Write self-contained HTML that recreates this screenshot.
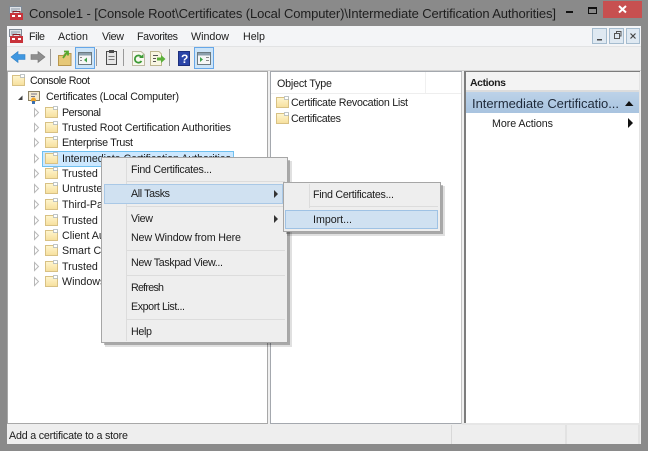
<!DOCTYPE html>
<html><head><meta charset="utf-8"><style>
html,body{margin:0;padding:0;background:#8a8a8a}
svg{display:block;filter:blur(.25px)}
text{font-family:"Liberation Sans",sans-serif;font-size:10.7px;fill:#1c1c1c}
</style></head><body>
<svg width="648" height="451" viewBox="0 0 648 451" xmlns="http://www.w3.org/2000/svg">
<defs>
<linearGradient id="fo" x1="0" y1="0" x2="0" y2="1"><stop offset="0" stop-color="#fff6cf"/><stop offset="1" stop-color="#f6df9c"/></linearGradient>
<linearGradient id="bl" x1="0" y1="0" x2="0" y2="1"><stop offset="0" stop-color="#bcd2e8"/><stop offset="1" stop-color="#a8c3df"/></linearGradient>
<g id="folder">
<path d="M0.500 1.500V11.500H12.500V1.500Z" fill="url(#fo)" stroke="#d8c184"/>
<path d="M8.500 0.500H12.500V3.500H8.500Z" fill="#fff" stroke="#aab4b8" stroke-width=".7"/>
</g>
<path id="tri" d="M0.500 0.500L4.500 4.500L0.500 8.500Z" fill="#fff" stroke="#b8b8b8"/>
<g id="app">
<rect x="0.500" y="0.500" width="12" height="7" fill="#dfe3e8" stroke="#7f8a96"/>
<path d="M2 3H11M2 5H8" stroke="#8a97a5"/>
<rect x="1" y="7" width="13" height="7" fill="#c8323a"/>
<path d="M4 7V5.500H11V7" fill="none" stroke="#8b1f25"/>
<rect x="3" y="9" width="3" height="2" fill="#fff"/>
<rect x="9" y="9" width="3" height="2" fill="#fff"/>
</g>
</defs>

<!-- frame -->
<rect width="648" height="451" fill="#8a8a8a"/>
<use href="#app" x="9" y="6"/>
<text x="29" y="18" style="font-size:13px;fill:#1e1e1e" textLength="527" lengthAdjust="spacing">Console1 - [Console Root\Certificates (Local Computer)\Intermediate Certification Authorities]</text>
<rect x="566" y="11" width="7" height="2" fill="#111"/>
<rect x="588.500" y="7.500" width="8" height="6" fill="none" stroke="#111"/><rect x="588" y="7" width="9" height="2" fill="#111"/>
<rect x="603" y="1" width="39" height="17" fill="#c75050"/>
<path d="M619 6L626 12.500M626 6L619 12.500" stroke="#fff" stroke-width="2"/>

<!-- client -->
<rect x="7" y="26" width="634" height="418" fill="#f0f0f0"/>
<rect x="7" y="26" width="634" height="20" fill="#f4f5f7"/>
<rect x="7" y="46" width="634" height="1" fill="#e2e3e4"/>
<use href="#app" x="9" y="29"/>
<text x="29" y="40" textLength="16" lengthAdjust="spacing">File</text>
<text x="58" y="40" textLength="30" lengthAdjust="spacing">Action</text>
<text x="102" y="40" textLength="22" lengthAdjust="spacing">View</text>
<text x="137" y="40" textLength="41" lengthAdjust="spacing">Favorites</text>
<text x="191" y="40" textLength="38" lengthAdjust="spacing">Window</text>
<text x="243" y="40" textLength="22" lengthAdjust="spacing">Help</text>

<!-- MDI buttons -->
<g fill="#dfe9f2" stroke="#a5bccf">
<rect x="592.500" y="28.500" width="14" height="15"/>
<rect x="609.500" y="28.500" width="14" height="15"/>
<rect x="626.500" y="28.500" width="13" height="15"/>
</g>
<rect x="597" y="39" width="5" height="1.500" fill="#444"/>
<path d="M614.500 33.500H619.500V38.500H614.500ZM616.500 33V31.500H621V36H620" fill="none" stroke="#555"/>
<path d="M630.500 33.500L635.500 38.500M635.500 33.500L630.500 38.500" stroke="#444" stroke-width="1.200"/>

<!-- toolbar -->
<path d="M11 57L18 51.500V54.500H25V59.500H18V62.500Z" fill="#3f97e0" stroke="#2f7fc4" stroke-width=".6"/>
<path d="M45 57L38 51.500V54.500H31V59.500H38V62.500Z" fill="#8e8e8e" stroke="#747474" stroke-width=".6"/>
<rect x="50" y="49" width="1" height="17" fill="#9a9a9a"/>
<path d="M58.500 55.500V65.500H71V53.500H65L63.500 55.500Z" fill="#e6c878" stroke="#b8964e"/>
<path d="M63 58L67 52.500M64 51.500H68V55.500" fill="none" stroke="#55a82e" stroke-width="1.800"/>
<rect x="75.500" y="47.500" width="19" height="21" fill="#cde4f7" stroke="#66a7e8"/>
<rect x="78.500" y="52.500" width="13" height="12" fill="#f6f6f6" stroke="#6c7a80"/>
<rect x="79" y="53" width="12" height="2.500" fill="#8da0ad"/>
<path d="M84 60L87 57.500V62.500Z" fill="#3ea34a"/>
<rect x="80" y="57" width="2" height="1" fill="#8a8a8a"/><rect x="80" y="60" width="2" height="1" fill="#8a8a8a"/>
<rect x="96" y="49" width="1" height="17" fill="#9a9a9a"/>
<rect x="106.500" y="51.500" width="10" height="13" fill="#e6e6e6" stroke="#4b4b4b"/>
<rect x="109" y="50" width="5" height="3" fill="#4b4b4b"/>
<path d="M108.500 56.500H114.500M108.500 59.500H114.500" stroke="#777"/>
<rect x="123" y="49" width="1" height="17" fill="#9a9a9a"/>
<path d="M132.500 51.500H141L144.500 54.500V65.500H132.500Z" fill="#f8f8ee" stroke="#bdb9a2"/>
<path d="M141 56.500A3.600 3.600 0 1 0 141.500 61" fill="none" stroke="#3c9a35" stroke-width="1.800"/>
<path d="M139 58H143.500V54Z" fill="#3c9a35"/>
<path d="M150.500 51.500H159L161.500 54V65.500H150.500Z" fill="#f8f6e2" stroke="#bdb78f"/>
<path d="M153 55.500H158M153 58.500H156M153 61.500H156" stroke="#555"/>
<path d="M157 57.500H161V55L165.500 59L161 63V60.500H157Z" fill="#5bb03a"/>
<rect x="169" y="49" width="1" height="17" fill="#9a9a9a"/>
<rect x="178.500" y="51.500" width="11" height="14" fill="#2b45a8" stroke="#1d2f7c"/>
<text x="181" y="63" style="font-size:12px;font-weight:bold;fill:#fff">?</text>
<rect x="194.500" y="47.500" width="19" height="21" fill="#cde4f7" stroke="#66a7e8"/>
<rect x="197.500" y="52.500" width="13" height="12" fill="#f6f6f6" stroke="#6c7a80"/>
<rect x="198" y="53" width="12" height="2.500" fill="#8da0ad"/>
<path d="M200 57L203 59.500L200 62Z" fill="#3ea34a"/>
<rect x="206" y="57" width="3" height="1" fill="#8a8a8a"/><rect x="206" y="60" width="3" height="1" fill="#8a8a8a"/>

<rect x="7" y="70" width="634" height="1" fill="#d0d0d0"/>

<!-- tree pane -->
<rect x="7" y="71" width="261" height="353" fill="#a8a8a8"/>
<rect x="8" y="72" width="259" height="351" fill="#fff"/>
<use href="#folder" x="12" y="74"/>
<text x="30" y="84" textLength="60" lengthAdjust="spacing">Console Root</text>
<path d="M18 100L22.500 95.500V100Z" fill="#404040"/>
<rect x="28.500" y="91.500" width="11" height="9" fill="#f4ead0" stroke="#8a8064"/>
<path d="M31 94H37M31 96.500H35" stroke="#778"/>
<circle cx="33.500" cy="100" r="2.500" fill="#eda52a"/><rect x="32" y="101" width="3" height="3" fill="#3a6fb0"/>
<text x="46" y="100" textLength="133" lengthAdjust="spacing">Certificates (Local Computer)</text>

<use href="#tri" x="34" y="108"/><use href="#folder" x="45" y="106"/>
<text x="62" y="116" textLength="39" lengthAdjust="spacing">Personal</text>
<use href="#tri" x="34" y="123"/><use href="#folder" x="45" y="121"/>
<text x="62" y="131" textLength="169" lengthAdjust="spacing">Trusted Root Certification Authorities</text>
<use href="#tri" x="34" y="138"/><use href="#folder" x="45" y="136"/>
<text x="62" y="146" textLength="71" lengthAdjust="spacing">Enterprise Trust</text>
<use href="#tri" x="34" y="154"/>
<rect x="42.500" y="151.500" width="191" height="15" fill="#cce8ff" stroke="#6fc0f0"/>
<use href="#folder" x="45" y="152"/>
<text x="62" y="162" textLength="169" lengthAdjust="spacing">Intermediate Certification Authorities</text>
<use href="#tri" x="34" y="169"/><use href="#folder" x="45" y="167"/>
<text x="62" y="177">Trusted Publishers</text>
<use href="#tri" x="34" y="184"/><use href="#folder" x="45" y="182"/>
<text x="62" y="192">Untrusted Certificates</text>
<use href="#tri" x="34" y="200"/><use href="#folder" x="45" y="198"/>
<text x="62" y="208">Third-Party Root</text>
<use href="#tri" x="34" y="216"/><use href="#folder" x="45" y="214"/>
<text x="62" y="224">Trusted People</text>
<use href="#tri" x="34" y="231"/><use href="#folder" x="45" y="229"/>
<text x="62" y="239">Client Authentication</text>
<use href="#tri" x="34" y="246"/><use href="#folder" x="45" y="244"/>
<text x="62" y="254">Smart Card Trusted</text>
<use href="#tri" x="34" y="262"/><use href="#folder" x="45" y="260"/>
<text x="62" y="270">Trusted Devices</text>
<use href="#tri" x="34" y="277"/><use href="#folder" x="45" y="275"/>
<text x="62" y="285">Windows Live ID</text>

<!-- center pane -->
<rect x="270" y="71" width="192" height="353" fill="#a4a8ae"/>
<rect x="271" y="72" width="190" height="351" fill="#fff"/>
<rect x="461" y="72" width="1" height="352" fill="#c4c4c4"/>
<rect x="425" y="72" width="1" height="21" fill="#f0f0f0"/>
<rect x="271" y="93" width="190" height="1" fill="#eeeeee"/>
<text x="277" y="87" textLength="55" lengthAdjust="spacing">Object Type</text>
<use href="#folder" x="276" y="96"/>
<text x="291" y="106" textLength="117" lengthAdjust="spacing">Certificate Revocation List</text>
<use href="#folder" x="276" y="112"/>
<text x="291" y="122" textLength="50" lengthAdjust="spacing">Certificates</text>

<!-- actions pane -->
<rect x="464" y="71" width="176" height="353" fill="#7c7c7c"/>
<rect x="466" y="72" width="174" height="352" fill="#fff"/>
<rect x="639" y="72" width="1" height="352" fill="#e4e4e4"/>
<rect x="466" y="72" width="173" height="18" fill="#f3f3f3"/>
<rect x="466" y="90" width="173" height="2" fill="#dcdcdc"/>
<text x="470" y="86" style="font-weight:bold;font-size:10.5px" textLength="36" lengthAdjust="spacing">Actions</text>
<rect x="466" y="92" width="173" height="21" fill="url(#bl)"/>
<text x="472" y="108" style="font-size:13px;fill:#1f2a3a" textLength="147" lengthAdjust="spacing">Intermediate Certificatio...</text>
<path d="M625 106L629 101L633.500 106Z" fill="#111"/>
<text x="492" y="127" textLength="61" lengthAdjust="spacing">More Actions</text>
<path d="M628 118L633 123L628 128Z" fill="#111"/>

<!-- status bar -->
<rect x="7" y="424" width="634" height="20" fill="#eeeeee"/>
<rect x="462" y="423" width="178" height="2" fill="#e6e6e6"/>
<rect x="451" y="425" width="1" height="19" fill="#d8d8d8"/>
<rect x="565" y="425" width="2" height="19" fill="#e2e2e2"/>
<rect x="638" y="425" width="2" height="19" fill="#e2e2e2"/>
<text x="9" y="439" textLength="119" lengthAdjust="spacing">Add a certificate to a store</text>

<!-- context menu -->
<rect x="105" y="161" width="187" height="186" fill="#000" opacity=".12"/>
<rect x="104" y="160" width="186" height="185" fill="#000" opacity=".25"/>
<rect x="101.500" y="157.500" width="186" height="185" fill="#eeeeee" stroke="#a6a6a6"/>
<rect x="126" y="159" width="1" height="182" fill="#dcdcdc"/>
<rect x="127" y="181" width="158" height="1" fill="#dcdcdc"/>
<rect x="127" y="206" width="158" height="1" fill="#dcdcdc"/>
<rect x="127" y="250" width="158" height="1" fill="#dcdcdc"/>
<rect x="127" y="275" width="158" height="1" fill="#dcdcdc"/>
<rect x="127" y="319" width="158" height="1" fill="#dcdcdc"/>
<rect x="104.500" y="184.500" width="178" height="19" fill="#d0e1f1" stroke="#a9c8e6"/>
<text x="131" y="173" textLength="81" lengthAdjust="spacing">Find Certificates...</text>
<text x="131" y="197" textLength="39" lengthAdjust="spacing">All Tasks</text>
<path d="M274 190L278 194L274 198Z" fill="#333"/>
<text x="131" y="222" textLength="22" lengthAdjust="spacing">View</text>
<path d="M274 215L278 219L274 223Z" fill="#333"/>
<text x="131" y="241" textLength="110" lengthAdjust="spacing">New Window from Here</text>
<text x="131" y="266" textLength="92" lengthAdjust="spacing">New Taskpad View...</text>
<text x="131" y="291" textLength="33" lengthAdjust="spacing">Refresh</text>
<text x="131" y="310" textLength="54" lengthAdjust="spacing">Export List...</text>
<text x="131" y="335" textLength="21" lengthAdjust="spacing">Help</text>

<!-- submenu -->
<rect x="287" y="186" width="158" height="50" fill="#000" opacity=".12"/>
<rect x="286" y="185" width="157" height="49" fill="#000" opacity=".25"/>
<rect x="283.500" y="182.500" width="157" height="49" fill="#eeeeee" stroke="#a6a6a6"/>
<rect x="309" y="184" width="1" height="24" fill="#dcdcdc"/>
<rect x="310" y="206" width="128" height="1" fill="#dcdcdc"/>
<rect x="285.500" y="210.500" width="152" height="18" fill="#d0e1f1" stroke="#9fc2e4"/>
<text x="313" y="198" textLength="81" lengthAdjust="spacing">Find Certificates...</text>
<text x="313" y="223" textLength="39" lengthAdjust="spacing">Import...</text>
</svg>
</body></html>
